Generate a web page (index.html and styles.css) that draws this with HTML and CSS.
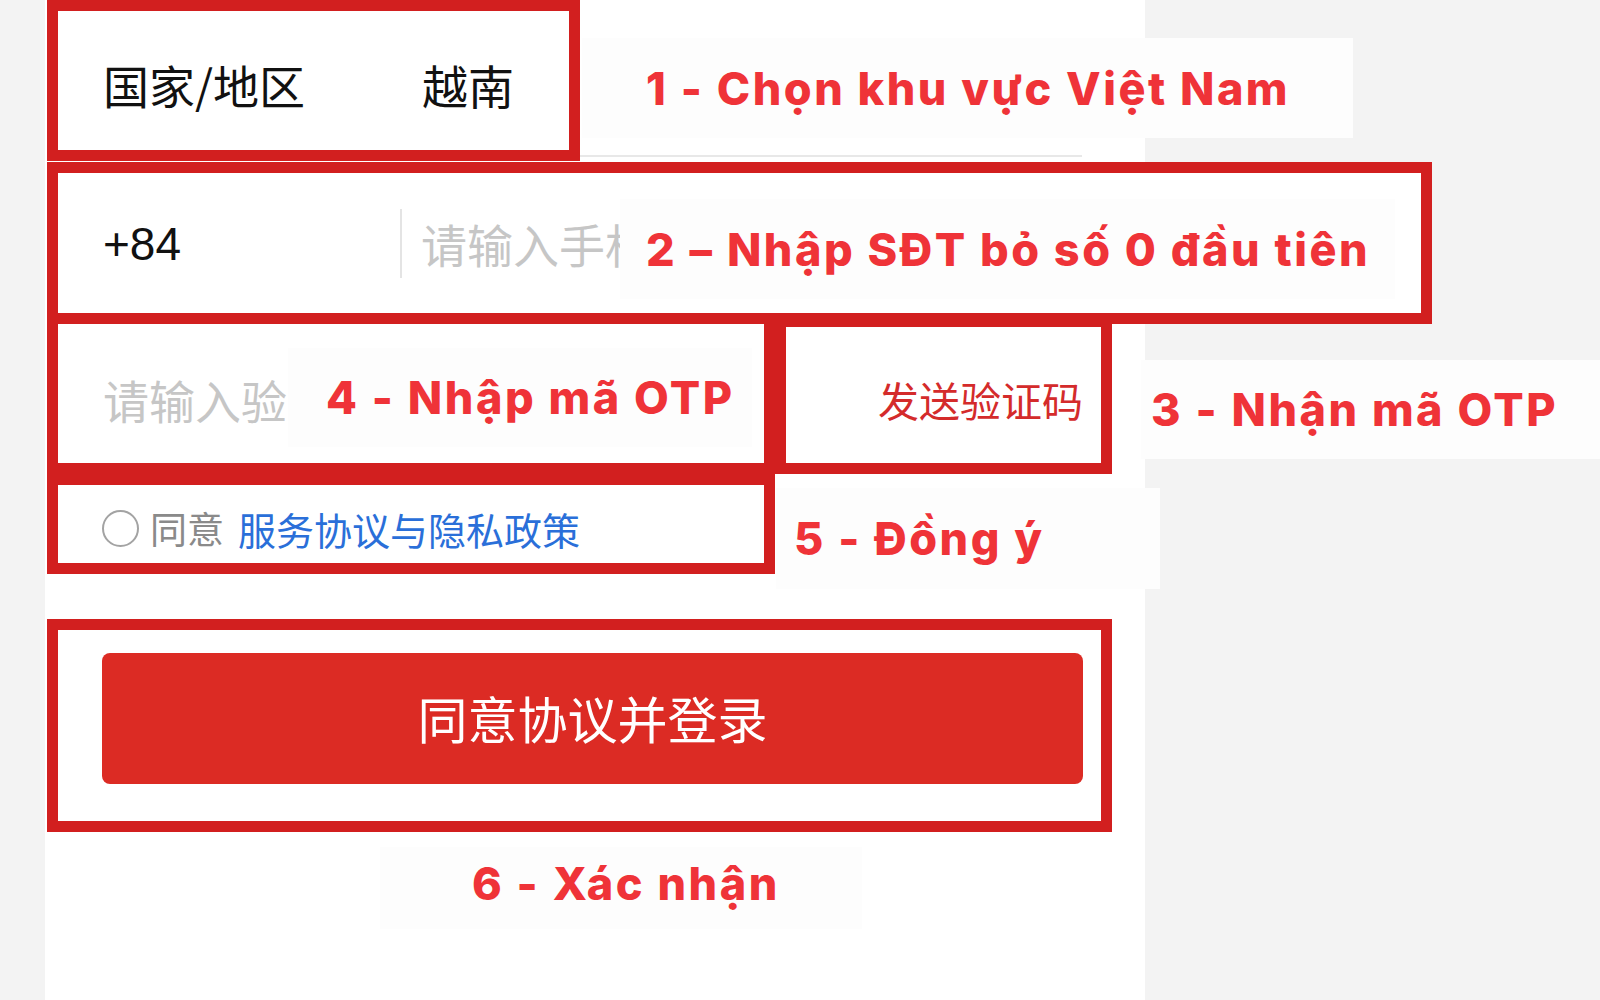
FILE: index.html
```html
<!DOCTYPE html>
<html lang="zh-CN">
<head>
<meta charset="utf-8">
<title>登录</title>
<link rel="stylesheet" href="styles.css">
</head>
<body>
<main class="sheet">
  <section class="row row-region">
    <div class="frame frame-region">
      <span class="region-label">国家/地区</span>
      <span class="region-value">越南</span>
    </div>
    <div class="region-aside">
      <div class="note note-1" lang="vi">1 - Chọn khu vực Việt Nam</div>
      <div class="separator"></div>
    </div>
  </section>

  <section class="row row-phone">
    <div class="frame frame-phone">
      <span class="prefix">+84</span>
      <span class="divider"></span>
      <span class="phone-input">请输入手机号码</span>
      <div class="note note-2" lang="vi">2 – Nhập SĐT bỏ số 0 đầu tiên</div>
    </div>
  </section>

  <section class="row row-code">
    <div class="frame frame-code">
      <span class="code-input">请输入验证码</span>
      <div class="note note-4" lang="vi">4 - Nhập mã OTP</div>
    </div>
    <div class="frame frame-send">
      <span class="send-code">发送验证码</span>
    </div>
    <div class="note note-3" lang="vi">3 - Nhận mã OTP</div>
  </section>

  <section class="row row-agree">
    <div class="frame frame-agree">
      <span class="radio"></span>
      <span class="agree-text">同意</span>
      <a class="agree-link">服务协议与隐私政策</a>
    </div>
    <div class="note note-5" lang="vi">5 - Đồng ý</div>
  </section>

  <section class="row row-submit">
    <div class="frame frame-submit">
      <button class="submit" type="button">同意协议并登录</button>
    </div>
  </section>

  <section class="row row-confirm">
    <div class="note note-6" lang="vi">6 - Xác nhận</div>
  </section>
</main>
</body>
</html>
```

FILE: styles.css
```css
* {
  box-sizing: border-box;
  margin: 0;
  padding: 0;
}

html,
body {
  background: #f3f3f3;
}

body {
  width: 1600px;
  height: 1000px;
  overflow: hidden;
  font-family: "Noto Sans CJK SC", "Liberation Sans", sans-serif;
}

/* white login column */
.sheet {
  margin-left: 45px;
  width: 1100px;
  height: 1000px;
  padding-left: 2px;
  background: #fff;
}

.row {
  display: flex;
}

.row > *,
.frame > * {
  flex: none;
}

/* red outline around each step */
.frame {
  border: 11px solid #d21f1f;
  background: #fff;
  display: flex;
  align-items: center;
}

/* step callouts */
.note {
  display: flex;
  align-items: center;
  white-space: nowrap;
  background: #fdfdfd;
  color: #ef3338;
  font-family: Inter, "Liberation Sans", sans-serif;
  font-weight: 800;
  font-size: 45px;
  letter-spacing: 2.5px;
}

/* row 1: country / region */
.row-region {
  height: 162px;
}

.frame-region {
  width: 533px;
  height: 161px;
  padding: 6px 0 0 45px;
  font-size: 46px;
  color: #111;
}

.region-label {
  width: 319px;
}

.region-aside {
  display: flex;
  flex-direction: column;
}

.note-1 {
  margin: 38px 0 0 2px;
  width: 771px;
  height: 100px;
  padding-left: 64px;
}

.separator {
  margin-top: 17px;
  width: 502px;
  height: 2px;
  background: #e8e8e8;
}

/* row 2: phone number */
.frame-phone {
  width: 1385px;
  height: 162px;
}

.prefix {
  width: 342px;
  padding: 2px 0 0 45px;
  font-family: "Liberation Sans", sans-serif;
  font-size: 46px;
  color: #111;
}

.divider {
  width: 2px;
  height: 69px;
  background: #e4e4e4;
}

.phone-input {
  width: 218px;
  padding: 0 0 0 19px;
  overflow: hidden;
  white-space: nowrap;
  font-size: 46px;
  color: #c6c6c6;
}

.note-2 {
  align-self: flex-start;
  margin-top: 26px;
  width: 775px;
  height: 100px;
  padding-left: 26px;
}

/* row 3: verification code */
.row-code {
  margin-top: -11px;
  height: 161px;
}

.frame-code {
  width: 728px;
  height: 161px;
}

.code-input {
  width: 230px;
  padding: 10px 0 0 45px;
  overflow: hidden;
  white-space: nowrap;
  font-size: 46px;
  color: #c6c6c6;
}

.note-4 {
  align-self: flex-start;
  margin-top: 24px;
  width: 464px;
  height: 99px;
  padding-left: 38px;
}

.frame-send {
  width: 337px;
  height: 161px;
  border-top-width: 14px;
  justify-content: flex-end;
  padding: 8px 18px 0 0;
}

.send-code {
  font-size: 41px;
  color: #d42b2b;
}

.note-3 {
  margin: 47px 0 0 29px;
  width: 459px;
  height: 99px;
  padding-left: 10px;
}

/* row 4: agreement */
.row-agree {
  height: 100px;
}

.frame-agree {
  width: 728px;
  height: 100px;
  padding: 8px 0 0 44px;
}

.radio {
  width: 37px;
  height: 37px;
  border: 2px solid #a3a3a3;
  border-radius: 50%;
  margin-right: 11px;
}

.agree-text {
  font-size: 37px;
  color: #8a8a8a;
  margin-right: 14px;
}

.agree-link {
  font-size: 38px;
  color: #2a6fd9;
  white-space: nowrap;
}

.note-5 {
  align-self: flex-start;
  margin: 14px 0 0 1px;
  width: 384px;
  height: 101px;
  padding-left: 18px;
}

/* row 5: submit */
.row-submit {
  margin-top: 45px;
}

.frame-submit {
  width: 1065px;
  height: 213px;
  align-items: flex-start;
  padding: 23px 0 0 44px;
}

.submit {
  width: 981px;
  height: 131px;
  border: none;
  border-radius: 8px;
  background: #dc2b24;
  color: #fff;
  font-family: "Noto Sans CJK SC", sans-serif;
  font-size: 50px;
  padding-bottom: 4px;
}

/* row 6: confirm callout */
.note-6 {
  margin: 15px 0 0 333px;
  width: 482px;
  height: 82px;
  padding: 0 0 9px 92px;
}
```
